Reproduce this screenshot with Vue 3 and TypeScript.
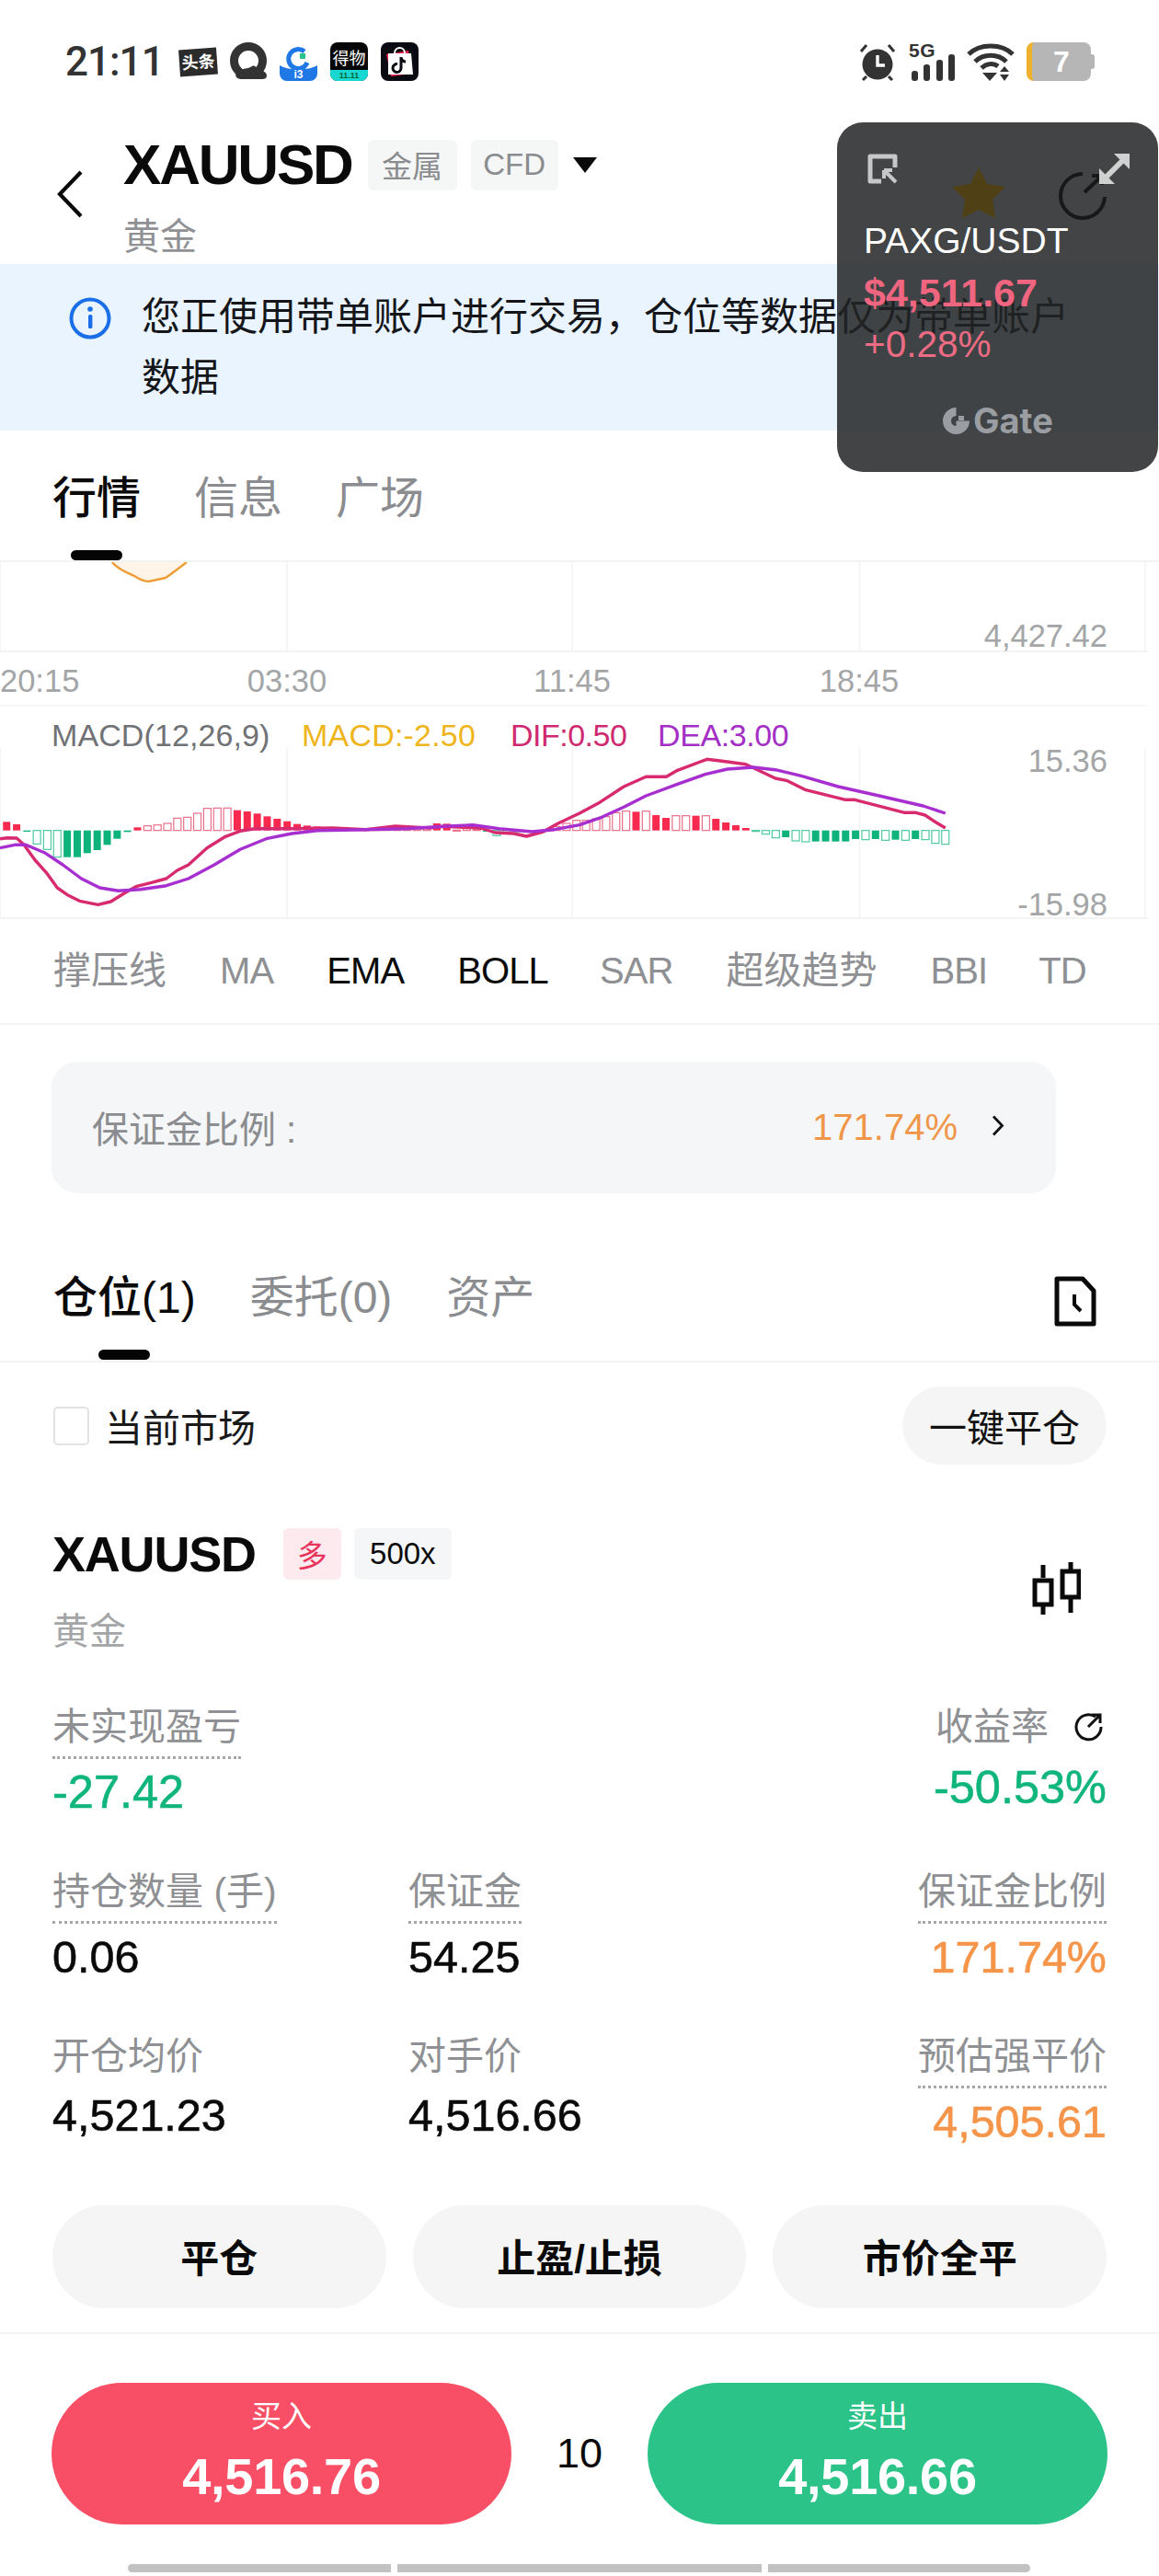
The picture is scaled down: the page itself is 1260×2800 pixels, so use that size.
<script setup lang="ts">
const mapA = (x: number) => x / 2.489
const mapB = (x: number) => 630 + x / 2.489
const mapY = (y: number) => 590 + y / 3

const difA: number[][] = [[0,965],[20,962],[45,963],[65,985],[95,1035],[125,1075],[155,1125],[185,1150],[215,1168],[265,1180],[300,1170],[340,1140],[370,1120],[410,1108],[450,1095],[480,1068],[510,1050],[560,995],[610,958],[650,940],[690,932],[780,932],[900,930],[990,935],[1070,924],[1160,930],[1200,925],[1300,930],[1340,945],[1390,948],[1425,957],[1470,942],[1510,915],[1568,882]]
const difB: number[][] = [[50,850],[120,795],[180,763],[235,763],[265,742],[345,706],[400,714],[450,722],[530,768],[560,775],[610,805],[720,838],[745,838],[880,880],[910,880],[935,888],[965,912],[990,930]]
const deaA: number[][] = [[0,995],[40,985],[70,985],[120,1010],[170,1050],[220,1095],[270,1125],[320,1135],[380,1130],[450,1118],[510,1095],[580,1050],[650,1000],[720,965],[790,948],[860,938],[990,935],[1100,932],[1200,925],[1280,920],[1350,932],[1440,942],[1500,935],[1568,920]]
const deaB: number[][] = [[60,895],[120,862],[180,825],[270,785],[340,755],[400,738],[470,732],[530,740],[600,760],[700,795],[800,822],[930,858],[990,882]]

const line = (a: number[][], b: number[][]) =>
  [...a.map(p => `${mapA(p[0]).toFixed(1)},${mapY(p[1]).toFixed(1)}`), ...b.map(p => `${mapB(p[0]).toFixed(1)},${mapY(p[1]).toFixed(1)}`)].join(' ')

const difLine = line(difA, difB)
const deaLine = line(deaA, deaB)

const barsA: number[][] = [[18,910,1],[45,918,1],[73,942,1],[100,982,0],[128,1000,0],[155,1025,0],[182,1025,1],[209,1025,1],[236,1012,1],[263,1002,1],[290,985,1],[317,965,1],[345,943,1],[372,928,1],[399,923,0],[426,920,0],[453,915,0],[480,898,0],[507,895,0],[534,882,0],[561,866,0],[588,865,0],[615,865,0],[642,872,1],[669,876,1],[696,883,1],[723,892,1],[750,900,1],[777,908,1],[804,917,1],[831,922,1],[858,925,1],[885,928,1],[912,930,0],[939,932,0],[966,932,0],[993,932,0],[1020,932,0],[1047,932,0],[1074,930,0],[1101,932,0],[1128,933,0],[1155,930,0],[1182,915,1],[1209,916,1],[1236,937,0],[1263,932,0],[1290,935,0],[1317,942,1],[1344,955,0],[1371,946,0],[1398,942,0],[1425,940,0],[1479,936,0],[1506,925,0],[1533,915,0],[1560,905,0]]
const barsB: number[][] = [[18,905,0],[45,900,0],[72,893,0],[99,880,0],[126,875,0],[153,877,1],[180,875,0],[207,888,1],[234,897,1],[261,890,0],[288,890,0],[315,890,1],[342,890,0],[369,900,1],[396,912,1],[423,921,1],[450,930,1],[477,940,0],[504,950,0],[531,962,0],[558,960,1],[585,972,0],[612,975,0],[639,974,1],[666,974,1],[693,974,1],[720,974,1],[747,966,1],[774,968,0],[801,966,1],[828,970,0],[855,968,1],[882,970,0],[909,966,1],[936,968,0],[963,980,0],[990,983,0]]

const toBar = (d: number[], map: (x: number) => number) => {
  const up = d[1] < 938
  const top = Math.min(mapY(d[1]), mapY(938))
  const h = Math.abs(mapY(d[1]) - mapY(938))
  const col = up ? '#f7294f' : '#0db37a'
  const soft = up ? '#e8708a' : '#4fc9a3'
  return {
    x: map(d[0]) - 4,
    y: top,
    h: Math.max(h, 1),
    fill: d[2] ? col : 'none',
    stroke: d[2] ? 'none' : soft,
  }
}
const bars = [...barsA.map(d => toBar(d, mapA)), ...barsB.map(d => toBar(d, mapB))]

const gridX = [0, 312, 622, 934.5, 1245]
const indicators = [
  { t: '撑压线', on: false, cjk: true }, { t: 'MA', on: false, cjk: false }, { t: 'EMA', on: true, cjk: false }, { t: 'BOLL', on: true, cjk: false },
  { t: 'SAR', on: false, cjk: false }, { t: '超级趋势', on: false, cjk: true }, { t: 'BBI', on: false, cjk: false }, { t: 'TD', on: false, cjk: false },
]
</script>

<template>
  <div class="page">
    <div class="status">
      <span class="time">21:11</span>
      <span class="toutiao"><span class="tt-text">头条</span></span>
      <svg class="ico" width="41" height="42" viewBox="0 0 41 42">
        <circle cx="20" cy="20" r="15.5" fill="none" stroke="#333" stroke-width="9" />
        <path d="M12 40c-5 0-7-4-5-7 2-2 4-2 6-2 2-5 7-8 12-6 3 1 5 3 6 5 5 0 9 3 9 6 0 3-2 4-5 4z" fill="#333" />
        <path d="M12 27c3-4 7-6 11-5l3 3-6 3-6 1z" fill="#fff" />
      </svg>
      <span class="app-i3">
        <svg width="41" height="42" viewBox="0 0 41 42">
          <path d="M0 25C10 31 31 31 41 25V34a8 8 0 0 1-8 8H8a8 8 0 0 1-8-8z" fill="#1f78e6" />
          <path d="M27 10a10.5 10.5 0 1 0 3 12" fill="none" stroke="#1f78e6" stroke-width="5" />
          <rect x="22" y="12" width="6" height="6" fill="#2cc388" />
          <text x="20.5" y="39" class="i3-text">i3</text>
        </svg>
      </span>
      <span class="app-dw">
        <svg width="41" height="42" viewBox="0 0 41 42">
          <rect width="41" height="42" rx="8" fill="#060606" />
          <path d="M0 30H41V34a8 8 0 0 1-8 8H8a8 8 0 0 1-8-8z" fill="#19d8d2" />
          <text x="20.5" y="24" class="dw-text">得物</text>
          <text x="20.5" y="39" class="dw-sub">11.11</text>
        </svg>
      </span>
      <span class="app-tk">
        <svg width="41" height="42" viewBox="0 0 41 42">
          <rect width="41" height="42" rx="8" fill="#0a0a12" />
          <path d="M6 13L30 9 34 34 11 37z" fill="#f0204f" />
          <path d="M8 12H33L35 35H8z" fill="#fff" />
          <path d="M15 12c0-8 11-8 11 0" fill="none" stroke="#fff" stroke-width="2" />
          <path d="M22 16v12a4.5 4.5 0 1 1-4-4.4M22 17c1 3 3 4 5 4" fill="none" stroke="#0a0a12" stroke-width="3" />
        </svg>
      </span>
      <span class="status-right">
        <svg width="42" height="42" viewBox="0 0 42 42">
          <circle cx="21" cy="24" r="16.5" fill="#333" />
          <path d="M21 14v11h8" fill="none" stroke="#fff" stroke-width="3.4" />
          <path d="M3 10l6-7M39 10l-6-7M5 41l4-4M37 41l-4-4" stroke="#333" stroke-width="3" fill="none" />
        </svg>
        <svg class="signal" width="50" height="48" viewBox="0 -6 50 48">
          <text x="0" y="16" class="fiveg">5G</text>
          <rect x="3" y="31" width="7" height="11" rx="3" fill="#333" />
          <rect x="16" y="24" width="7" height="18" rx="3" fill="#333" />
          <rect x="30" y="19" width="7" height="23" rx="3" fill="#333" />
          <rect x="43" y="13" width="7" height="29" rx="3" fill="#333" />
        </svg>
        <svg width="52" height="42" viewBox="0 0 52 42">
          <path d="M2 13C14 1 38 1 50 13" fill="none" stroke="#333" stroke-width="5" />
          <path d="M9 21C18 12 34 12 43 21" fill="none" stroke="#333" stroke-width="5" />
          <path d="M16 28C21 23 29 22 34 26" fill="none" stroke="#333" stroke-width="5" />
          <path d="M17 33H33L25 42z" fill="#333" />
          <path d="M41 26L46 32H36zM41 42L46 35H36z" fill="#333" />
        </svg>
        <span class="battery">
          <span class="batt-body"><span class="batt-num">7</span></span>
          <span class="batt-nub"></span>
        </span>
      </span>
    </div>

    <div class="header">
      <svg class="back" width="28" height="52" viewBox="0 0 28 52">
        <path d="M26 2L3 26 26 50" fill="none" stroke="#0a0a0a" stroke-width="4.2" />
      </svg>
      <div class="title-col">
        <div class="title-row">
          <span class="title">XAUUSD</span>
          <span class="tag t1">金属</span>
          <span class="tag t2">CFD</span>
          <span class="tri"></span>
        </div>
        <div class="sub">黄金</div>
      </div>
    </div>

    <div class="banner">
      <svg class="info" width="46" height="46" viewBox="0 0 46 46">
        <circle cx="23" cy="23" r="20.5" fill="none" stroke="#1a6fe8" stroke-width="4" />
        <rect x="21" y="19" width="4.4" height="15" rx="1.5" fill="#1a6fe8" />
        <circle cx="23" cy="13" r="2.8" fill="#1a6fe8" />
      </svg>
      <div class="banner-text">您正使用带单账户进行交易，仓位等数据仅为带单账户数据</div>
    </div>

    <div class="tabs">
      <div class="tab on"><span class="tab-t">行情</span><i class="bar"></i></div>
      <div class="tab"><span class="tab-t">信息</span></div>
      <div class="tab"><span class="tab-t">广场</span></div>
    </div>

    <svg class="chart" width="1260" height="393" viewBox="0 611 1260 393">
      <path d="M122 611C132 621 150 631 162 632 172 632 182 630 186 626L203 611z" fill="#fff4e8" />
      <path d="M122 611C126 617 134 621 146 626 152 630 158 632 162 632L180 628C186 624 194 618 203 611" fill="none" stroke="#ee9f3a" stroke-width="2.5" />
      <line v-for="g in gridX" :key="'a' + g" :x1="g" :x2="g" y1="611" y2="708" stroke="#f3f3f3" stroke-width="1.5" />
      <line v-for="g in gridX" :key="'b' + g" :x1="g" :x2="g" y1="812" y2="998" stroke="#f3f3f3" stroke-width="1.5" />
      <line x1="0" x2="1248" y1="708" y2="708" stroke="#f3f3f3" stroke-width="2" />
      <line x1="0" x2="1248" y1="767" y2="767" stroke="#f6f6f6" stroke-width="1.5" />
      <line x1="0" x2="1248" y1="998" y2="998" stroke="#f3f3f3" stroke-width="2" />
      <text x="1204" y="703" class="axis end">4,427.42</text>
      <text x="0" y="752" class="axis">20:15</text>
      <text x="312" y="752" class="axis mid">03:30</text>
      <text x="622" y="752" class="axis mid">11:45</text>
      <text x="934" y="752" class="axis mid">18:45</text>
      <text x="56" y="811" class="leg l-g">MACD(12,26,9)</text>
      <text x="328" y="811" class="leg l-y">MACD:-2.50</text>
      <text x="555" y="811" class="leg l-p">DIF:0.50</text>
      <text x="715" y="811" class="leg l-v">DEA:3.00</text>
      <text x="1204" y="839" class="axis end">15.36</text>
      <text x="1204" y="995" class="axis end">-15.98</text>
      <rect v-for="(b, i) in bars" :key="i" :x="b.x" :y="b.y" width="8" :height="b.h" :fill="b.fill" :stroke="b.stroke" stroke-width="1.2" />
      <polyline :points="difLine" fill="none" stroke="#d82a6e" stroke-width="3.4" stroke-linejoin="round" />
      <polyline :points="deaLine" fill="none" stroke="#a72fd0" stroke-width="3.4" stroke-linejoin="round" />
    </svg>

    <div class="indicators">
      <span v-for="it in indicators" :key="it.t" class="ind" :class="{ on: it.on, cjk: it.cjk }">{{ it.t }}</span>
    </div>

    <div class="margin-card">
      <span class="mc-label">保证金比例 :</span>
      <span class="mc-value">171.74%</span>
      <svg width="15" height="23" viewBox="0 0 15 23" class="mc-chev">
        <path d="M3 1.5L12.5 11.5 3 21.5" fill="none" stroke="#111" stroke-width="2.8" />
      </svg>
    </div>

    <div class="tabs tabs2">
      <div class="tab on"><span class="tab-t">仓位(1)</span><i class="bar"></i></div>
      <div class="tab"><span class="tab-t">委托(0)</span></div>
      <div class="tab"><span class="tab-t">资产</span></div>
      <svg class="doc" width="46" height="55" viewBox="0 0 46 55">
        <path d="M3 3H31L43 16V52H3z" fill="none" stroke="#0a0a0a" stroke-width="5" stroke-linejoin="round" />
        <path d="M22 20V31L29 38" fill="none" stroke="#0a0a0a" stroke-width="4" />
      </svg>
    </div>

    <div class="toolbar">
      <span class="check"></span>
      <span class="check-label">当前市场</span>
      <span class="one-click">一键平仓</span>
    </div>

    <div class="pos-head">
      <div>
        <div class="pos-row">
          <span class="pos-title">XAUUSD</span>
          <span class="pos-tag long">多</span>
          <span class="pos-tag lev">500x</span>
        </div>
        <div class="pos-sub">黄金</div>
      </div>
      <svg class="candle" width="53" height="57" viewBox="0 0 53 57">
        <path d="M12 3V17M12 46V57M42 0V10M42 39V55" stroke="#0a0a0a" stroke-width="5" fill="none" />
        <rect x="3" y="20" width="18" height="26" fill="none" stroke="#0a0a0a" stroke-width="5" />
        <rect x="33" y="10" width="18" height="28" fill="none" stroke="#0a0a0a" stroke-width="5" />
      </svg>
    </div>

    <div class="metrics">
      <div class="m-row">
        <div class="m-col c1">
          <span class="lab dot">未实现盈亏</span>
          <span class="val green big">-27.42</span>
        </div>
        <div class="m-col c2"></div>
        <div class="m-col c3">
          <span class="lab">收益率
            <svg class="share-s" width="32" height="32" viewBox="0 0 32 32">
              <path d="M23 5A13.5 13.5 0 1 0 29 16" fill="none" stroke="#111" stroke-width="3" />
              <path d="M15 16L27 4M19 3H28V12" fill="none" stroke="#111" stroke-width="3" />
            </svg>
          </span>
          <span class="val green big up">-50.53%</span>
        </div>
      </div>
      <div class="m-row">
        <div class="m-col c1">
          <span class="lab dot">持仓数量 (手)</span>
          <span class="val">0.06</span>
        </div>
        <div class="m-col c2">
          <span class="lab dot">保证金</span>
          <span class="val">54.25</span>
        </div>
        <div class="m-col c3">
          <span class="lab dot">保证金比例</span>
          <span class="val orange">171.74%</span>
        </div>
      </div>
      <div class="m-row">
        <div class="m-col c1">
          <span class="lab">开仓均价</span>
          <span class="val plain">4,521.23</span>
        </div>
        <div class="m-col c2">
          <span class="lab">对手价</span>
          <span class="val plain">4,516.66</span>
        </div>
        <div class="m-col c3">
          <span class="lab dot">预估强平价</span>
          <span class="val orange">4,505.61</span>
        </div>
      </div>
    </div>

    <div class="actions">
      <span class="act">平仓</span>
      <span class="act">止盈/止损</span>
      <span class="act">市价全平</span>
    </div>

    <div class="trade">
      <div class="trade-btn buy"><span class="tb-l">买入</span><span class="tb-p">4,516.76</span></div>
      <span class="lots">10</span>
      <div class="trade-btn sell"><span class="tb-l">卖出</span><span class="tb-p">4,516.66</span></div>
    </div>

    <div class="nav">
      <i class="n1"></i><i class="n2"></i><i class="n3"></i>
    </div>

    <div class="float">
      <svg class="pip" width="33" height="33" viewBox="0 0 33 33">
        <path d="M15 30H3V3H30V15" fill="none" stroke="#c6c7c8" stroke-width="5" stroke-linejoin="round" />
        <path d="M18 18L31 31M18 18H27M18 18V27" fill="none" stroke="#c6c7c8" stroke-width="4" />
      </svg>
      <svg class="star" width="58" height="55" viewBox="0 0 58 55">
        <path d="M29 0L38 18 58 21 44 35 47 55 29 46 11 55 14 35 0 21 20 18z" fill="#4f4115" />
      </svg>
      <svg class="reshare" width="54" height="54" viewBox="0 0 54 54">
        <path d="M27 4A24 24 0 1 0 51 29" fill="none" stroke="#17181a" stroke-width="4" />
        <path d="M29 24L47 7M37 6H48V16" fill="none" stroke="#17181a" stroke-width="4" />
      </svg>
      <svg class="expand" width="33" height="33" viewBox="0 0 33 33">
        <path d="M33 0V17L16 0zM0 33V16L17 33z" fill="#d0d1d1" />
        <path d="M6 27L27 6" stroke="#d0d1d1" stroke-width="6" />
      </svg>
      <div class="f-pair">PAXG/USDT</div>
      <div class="f-price">$4,511.67</div>
      <div class="f-pct">+0.28%</div>
      <div class="f-logo">
        <svg width="29" height="29" viewBox="0 0 29 29">
          <path d="M14.5 0A14.5 14.5 0 1 0 29 14.5H14.5V20A5.5 5.5 0 1 1 14.5 9z" fill="#9a9ea2" />
          <rect x="17" y="9" width="6" height="5" fill="#9a9ea2" />
        </svg>
        <span class="f-gate">Gate</span>
      </div>
    </div>
  </div>
</template>

<style>
html, body { margin: 0; background: #fff; }
</style>

<style scoped>
.page {
  position: relative;
  width: 1260px;
  height: 2800px;
  overflow: hidden;
  background: #fff;
  color: #0a0a0a;
  font-family: "Liberation Sans", "Noto Sans CJK SC", sans-serif;
}
.status {
  display: flex;
  align-items: flex-start;
  box-sizing: border-box;
  height: 134px;
  padding: 46px 70px 0 71px;
}
.time {
  width: 104px;
  margin-right: 20px;
  font: 500 44px/42px Roboto, sans-serif;
  color: #333;
  letter-spacing: -1px;
}
.toutiao {
  display: flex;
  align-items: center;
  justify-content: center;
  width: 41px;
  height: 29px;
  margin: 7px 14px 0 0;
  background: #2b2b2b;
  transform: rotate(-4deg);
}
.tt-text { font-size: 18px; font-weight: 700; color: #fff; line-height: 1; white-space: nowrap; }
.ico { margin-right: 13px; }
.app-i3, .app-dw, .app-tk { display: block; width: 41px; height: 42px; margin-right: 14px; }
.app-i3 { background: #fff; border: 0; border-radius: 8px; }
.i3-text { font-size: 12px; fill: #fff; text-anchor: middle; font-weight: 700; }
.dw-text { font-size: 18px; fill: #fff; text-anchor: middle; }
.dw-sub { font-size: 9px; fill: #063; text-anchor: middle; font-weight: 700; }
.status-right { display: flex; align-items: flex-start; margin-left: auto; gap: 13px; }
.signal { margin-top: -6px; }
.fiveg { font-size: 21px; font-weight: 700; fill: #333; letter-spacing: 0.5px; }
.battery { display: flex; align-items: center; width: 74px; height: 42px; }
.batt-body {
  display: flex;
  align-items: center;
  justify-content: center;
  box-sizing: border-box;
  width: 70px;
  height: 42px;
  border-left: 6px solid #efb12b;
  border-radius: 8px;
  background: #b6b6b6;
}
.batt-num { font-size: 32px; font-weight: 700; color: #fff; line-height: 1; }
.batt-nub { width: 4px; height: 16px; border-radius: 0 3px 3px 0; background: #b6b6b6; }

.header {
  display: flex;
  align-items: center;
  box-sizing: border-box;
  height: 153px;
  padding-left: 62px;
}
.back { margin-right: 44px; flex: none; }
.title-col { align-self: flex-start; margin-top: 12px; }
.title-row { display: flex; align-items: center; height: 66px; }
.title { font-size: 62px; font-weight: 700; letter-spacing: -2.2px; line-height: 66px; margin-right: 17px; }
.tag {
  display: flex;
  align-items: center;
  justify-content: center;
  box-sizing: border-box;
  height: 55px;
  border-radius: 6px;
  background: #f5f6f6;
  font-size: 33px;
  color: #8a8c8f;
}
.t1 { width: 97px; margin-right: 15px; }
.t2 { width: 95px; margin-right: 16px; }
.tri {
  width: 0;
  height: 0;
  border-left: 13px solid transparent;
  border-right: 13px solid transparent;
  border-top: 17px solid #0a0a0a;
}
.sub { margin-top: 21px; font-size: 40px; line-height: 48px; color: #8f9194; }

.banner {
  display: flex;
  align-items: flex-start;
  box-sizing: border-box;
  height: 181px;
  padding: 25px 0 0 75px;
  background: #e9f4fe;
}
.info { margin: 11px 33px 0 0; flex: none; }
.banner-text { width: 1020px; font-size: 42px; line-height: 66px; color: #14161a; }

.tabs {
  display: flex;
  align-items: flex-start;
  gap: 58px;
  box-sizing: border-box;
  height: 143px;
  padding: 44px 0 0 57px;
  border-bottom: 2px solid #f3f3f3;
}
.tab { display: flex; flex-direction: column; align-items: center; }
.tab-t { font-size: 48px; line-height: 60px; color: #8a8c8f; white-space: nowrap; }
.tab.on .tab-t { color: #0a0a0a; font-weight: 500; }
.bar { display: block; width: 56px; height: 11px; margin-top: 26px; border-radius: 6px; background: #050505; }
.chart { display: block; }
.axis { font-size: 34.5px; fill: #a3a5a7; }
.end { text-anchor: end; }
.mid { text-anchor: middle; }
.leg { font-size: 34px; }
.l-g { fill: #707275; letter-spacing: 0.1px; }
.l-y { fill: #efb51c; letter-spacing: 0.2px; }
.l-p { fill: #cf2a70; letter-spacing: -0.5px; }
.l-v { fill: #a32fc5; letter-spacing: -0.4px; }

.indicators {
  display: flex;
  gap: 58px;
  box-sizing: border-box;
  height: 110px;
  padding: 26px 0 0 58px;
  border-bottom: 2px solid #f3f3f3;
  font-size: 40px;
  line-height: 50px;
  color: #8e9093;
  white-space: nowrap;
}
.ind { letter-spacing: -0.9px; }
.ind.cjk { font-size: 41px; letter-spacing: 0; }
.ind.on { color: #0a0a0a; }
.ind:nth-child(5), .ind:nth-child(8) { margin-left: -2px; }

.margin-card {
  display: flex;
  align-items: center;
  box-sizing: border-box;
  width: 1092px;
  height: 143px;
  margin: 40px 0 0 56px;
  padding: 0 56px 0 44px;
  border-radius: 28px;
  background: #f4f6f7;
  font-size: 40px;
}
.mc-label { color: #8a8c8f; margin-bottom: 2px; }
.mc-value { margin-left: auto; color: #f0964a; }
.mc-chev { margin-left: 36px; margin-bottom: 4px; }

.tabs2 { height: 184px; padding: 84px 68px 0 58px; gap: 59px; }
.doc { margin: 6px 0 0 auto; }

.toolbar {
  display: flex;
  align-items: center;
  height: 85px;
  margin-top: 26px;
  padding: 0 57px 0 58px;
  font-size: 41px;
}
.check {
  box-sizing: border-box;
  width: 39px;
  height: 42px;
  margin-right: 17px;
  border: 2.5px solid #e2e2e2;
  border-radius: 5px;
}
.check-label { color: #1a1a1a; margin-bottom: 2px; }
.one-click {
  display: flex;
  align-items: center;
  justify-content: center;
  box-sizing: border-box;
  width: 222px;
  height: 85px;
  margin-left: auto;
  padding-bottom: 2px;
  border-radius: 43px;
  background: #f5f5f5;
  color: #111;
}

.pos-head {
  display: flex;
  justify-content: space-between;
  margin-top: 69px;
  padding: 0 85px 0 57px;
}
.pos-row { display: flex; align-items: center; height: 56px; }
.pos-title { font-size: 54px; font-weight: 700; letter-spacing: -1.2px; margin-right: 30px; }
.pos-tag {
  display: flex;
  align-items: center;
  justify-content: center;
  height: 56px;
  border-radius: 6px;
  font-size: 33px;
}
.long { width: 63px; margin-right: 14px; background: #fdeaee; color: #e8345c; }
.lev { width: 106px; background: #f4f6f7; color: #0a0a0a; }
.pos-sub { margin-top: 32px; font-size: 40px; line-height: 48px; color: #a3a5a7; }
.candle { margin-top: 37px; }

.metrics {
  display: flex;
  flex-direction: column;
  gap: 56px;
  margin-top: 56px;
  padding: 0 57px;
}
.m-row { display: flex; height: 123px; }
.m-col { display: flex; flex-direction: column; align-items: flex-start; }
.c1 { width: 387px; }
.c2 { flex: 1; }
.c3 { align-items: flex-end; }
.lab { display: flex; align-items: center; font-size: 41px; line-height: 48px; color: #8e9093; white-space: nowrap; }
.dot { height: 48px; padding-bottom: 8px; border-bottom: 3px dotted #a4a6a8; }
.share-s { margin-left: 28px; margin-right: 3px; }
.val { margin-top: 8px; font-size: 48.5px; line-height: 56px; color: #0a0a0a; -webkit-text-stroke: 0.6px currentColor; }
.plain { margin-top: 12px; }
.big { font-size: 50.5px; }
.up { margin-top: 14px; }
.green { color: #10b57c; }
.orange { color: #f5954a; }

.actions {
  display: flex;
  gap: 29px;
  box-sizing: border-box;
  height: 140px;
  margin-top: 63px;
  padding: 0 57px 26px;
  border-bottom: 2px solid #f3f3f3;
}
.act {
  display: flex;
  flex: 1;
  align-items: center;
  justify-content: center;
  box-sizing: border-box;
  padding-bottom: 4px;
  border-radius: 56px;
  background: #f5f5f5;
  font-size: 42px;
  font-weight: 700;
}
.trade {
  display: flex;
  align-items: center;
  margin-top: 53px;
  padding: 0 56px;
}
.trade-btn {
  display: flex;
  flex-direction: column;
  align-items: center;
  box-sizing: border-box;
  width: 500px;
  height: 154px;
  padding-top: 16px;
  border-radius: 77px;
  color: #fff;
}
.buy { background: #f94f66; }
.sell { background: #2cc388; }
.tb-l { font-size: 33px; line-height: 42px; }
.tb-p { margin-top: 12px; font-size: 56px; font-weight: 700; line-height: 64px; letter-spacing: -0.3px; }
.lots { flex: 1; text-align: center; font-size: 45px; }

.nav { display: flex; gap: 7px; height: 9px; margin: 43px 0 0 139px; }
.nav i { display: block; height: 9px; background: #c2c2c2; }
.n1 { width: 286px; border-radius: 5px 0 0 5px; }
.n2 { width: 396px; }
.n3 { width: 285px; border-radius: 0 5px 5px 0; }

.float {
  position: absolute;
  left: 910px;
  top: 133px;
  box-sizing: border-box;
  width: 349px;
  height: 380px;
  padding: 105px 0 0 29px;
  border-radius: 28px;
  background: rgba(33, 35, 37, 0.85);
}
.pip { position: absolute; left: 33px; top: 34px; }
.star { position: absolute; left: 125px; top: 49px; }
.reshare { position: absolute; left: 240px; top: 52px; }
.expand { position: absolute; left: 285px; top: 34px; }
.f-pair { font-size: 39px; line-height: 48px; color: #fff; }
.f-price { margin-top: 8px; font-size: 43px; font-weight: 700; line-height: 48px; color: #f0657f; }
.f-pct { margin-top: 8px; font-size: 40.5px; line-height: 48px; color: #ee6b84; }
.f-logo {
  position: absolute;
  left: 115px;
  top: 310px;
  display: flex;
  align-items: center;
  gap: 4px;
}
.f-gate { font-family: Inter, sans-serif; font-size: 38px; font-weight: 700; line-height: 29px; color: #9a9ea2; letter-spacing: 0; }
</style>
